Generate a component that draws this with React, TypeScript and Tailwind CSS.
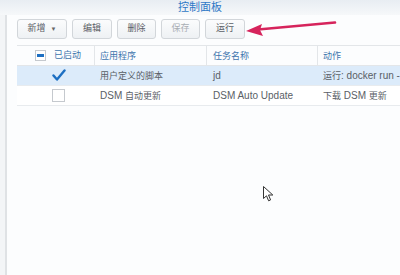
import React from "react";

const font = "font-['Liberation_Sans','Noto_Sans_CJK_SC',sans-serif]";

const buttons = [
  { label: "新增", w: "w-[50px]", caret: true },
  { label: "编辑", w: "w-[40px]" },
  { label: "删除", w: "w-[39px]" },
  { label: "保存", w: "w-[39px]", disabled: true },
  { label: "运行", w: "w-[40px]" },
];

const rows = [
  { on: true, app: "用户定义的脚本", name: "jd", action: "运行: docker run -" },
  { on: false, app: "DSM 自动更新", name: "DSM Auto Update", action: "下载 DSM 更新" },
];

// CJK glyphs in the screenshot run narrower than the Latin text beside them
function T({ s }: { s: string }) {
  const parts = s.split(/([\u3000-\u9fff\uff00-\uffef]+)/).filter(Boolean);
  return (
    <>
      {parts.map((p, i) =>
        /[\u3000-\u9fff\uff00-\uffef]/.test(p) ? (
          <span key={i} className="text-[9px]">{p}</span>
        ) : (
          <span key={i}>{p}</span>
        )
      )}
    </>
  );
}

function Check({ on }: { on: boolean }) {
  if (on) {
    return (
      <svg width="14" height="13" viewBox="0 0 14 13">
        <path d="M1.5 6.5 L5 10.5 L12.5 1.5" fill="none" stroke="#1d6fc2" strokeWidth="2.4" strokeLinecap="round" strokeLinejoin="round" />
      </svg>
    );
  }
  return <div className="h-[13px] w-[13px] border border-[#c5c9ce] bg-white" />;
}

export default function App() {
  return (
    <div className={`relative h-[275px] w-[400px] overflow-hidden bg-[#fcfdfe] ${font}`}>
      {/* title */}
      <div className="flex h-[15px] items-center justify-center bg-gradient-to-b from-[#e8edf2] to-[#f6f8fa] text-[11px] text-[#2f78c6]">
        控制面板
      </div>

      <div className="flex h-[260px]">
        <div className="w-[7px] shrink-0 border-r-2 border-[#dfe2e5] bg-[#f3f5f7]" />

        <div className="min-w-0 flex-1 pl-[10px]">
          {/* toolbar */}
          <div className="flex gap-[5px] pt-[4px] pb-[6px]">
            {buttons.map((b) => (
              <div
                key={b.label}
                className={`flex h-[20px] ${b.w} items-center justify-center gap-[5px] rounded-[3px] border border-[#d2d6da] bg-gradient-to-b from-[#fbfcfd] to-[#eef1f4] text-[9px] ${
                  b.disabled ? "text-[#a9aeb4]" : "text-[#5a6066]"
                }`}
              >
                {b.label}
                {b.caret && <span className="text-[6px] text-[#666]">▼</span>}
              </div>
            ))}
          </div>

          {/* table */}
          <div className="border-t border-[#e3e6e9] text-[10px]">
            <div className="flex h-[20px] items-center border-b border-[#e3e6e9] text-[#3c74ad]">
              <div className="flex w-[77px] shrink-0 items-center gap-[8px] pl-[18px]">
                <div className="flex h-[11px] w-[11px] items-center justify-center border border-[#c5c9ce] bg-white">
                  <div className="h-[3px] w-[7px] bg-[#1d6fc2]" />
                </div>
                <T s="已启动" />
              </div>
              <div className="h-full w-[112px] shrink-0 border-l border-[#e3e6e9] pl-[5px] leading-[20px]"><T s="应用程序" /></div>
              <div className="h-full w-[111px] shrink-0 border-l border-[#e3e6e9] pl-[6px] leading-[20px]"><T s="任务名称" /></div>
              <div className="h-full flex-1 border-l border-[#e3e6e9] pl-[5px] leading-[20px]"><T s="动作" /></div>
            </div>
            {rows.map((r) => (
              <div
                key={r.name}
                className={`flex h-[20px] items-center border-b border-[#e8ebee] text-[#5a6066] ${
                  r.on ? "bg-[#dcebfa]" : "bg-white"
                }`}
              >
                <div className="flex w-[77px] shrink-0 justify-start pl-[35px]">
                  <Check on={r.on} />
                </div>
                <div className="w-[112px] shrink-0 pl-[6px]"><T s={r.app} /></div>
                <div className="w-[111px] shrink-0 pl-[7px]">{r.name}</div>
                <div className="min-w-0 flex-1 overflow-hidden whitespace-nowrap pl-[6px]"><T s={r.action} /></div>
              </div>
            ))}
          </div>
        </div>
      </div>

      {/* annotation arrow */}
      <svg className="absolute left-0 top-0" width="400" height="275" viewBox="0 0 400 275">
        <path d="M335 22.5 L258 29.5" stroke="#d6245c" strokeWidth="2.6" strokeLinecap="round" />
        <path d="M246 31 L262 24 L260 30 L263 36 Z" fill="#d6245c" />
      </svg>

      {/* mouse cursor */}
      <svg className="absolute left-[263px] top-[186px]" width="11" height="16" viewBox="0 0 11 16">
        <path d="M0.5 0.5 L0.5 12.5 L3.5 9.8 L5.6 14.8 L7.6 13.9 L5.5 9 L9.8 9 Z" fill="#fff" stroke="#333" strokeWidth="1" strokeLinejoin="round" />
      </svg>
    </div>
  );
}
